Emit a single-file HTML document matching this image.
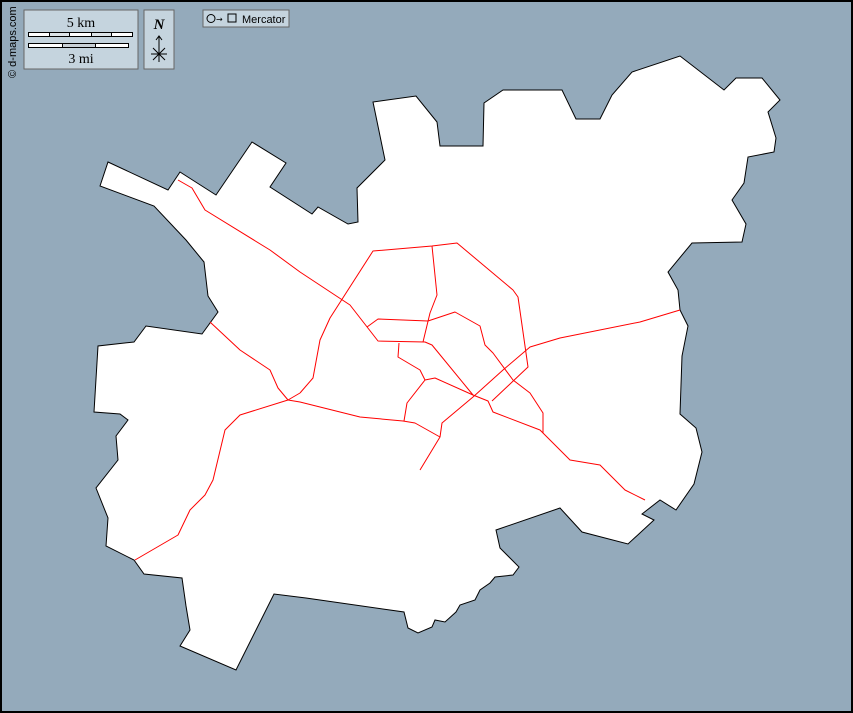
<!DOCTYPE html>
<html><head><meta charset="utf-8"><style>
html,body{margin:0;padding:0;background:#94aabb;}
.wrap{position:relative;width:853px;height:713px;overflow:hidden;}
svg{position:absolute;left:0;top:0;}
</style></head><body><div class="wrap">
<svg width="853" height="713" viewBox="0 0 853 713">
<rect x="1" y="1" width="851" height="711" fill="#94aabb" stroke="#000" stroke-width="2"/>
<polygon fill="#fff" stroke="#000" stroke-width="1" points="100,186 108,162 168,190 180,172 216,195 252,142 286,163 270,187 312,214 318,207 348,224 358,222 357,188 385,160 373,102 416,96 437,122 440,146 483,146 484,103 503,90 562,90 576,119 600,119 612,95 632,72 680,56 724,90 736,78 762,78 780,100 768,112 776,138 774,152 748,157 744,183 732,200 746,224 742,242 692,243 668,272 678,290 680,310 688,326 682,356 680,414 696,428 702,452 694,484 676,510 660,500 642,514 654,520 628,544 582,532 560,508 496,530 500,548 519,567 513,575 495,577 490,583 480,590 475,600 460,605 456,612 445,622 435,620 432,627 418,633 408,628 404,612 306,598 274,594 236,670 180,646 190,630 186,606 182,578 144,574 134,560 106,546 108,518 96,488 118,460 116,436 128,420 120,414 94,412 98,346 134,342 146,326 202,334 218,312 208,296 204,262 186,240 154,206"/>
<g fill="none" stroke="#f00" stroke-width="1" stroke-linejoin="round">
<polyline points="178,180 192,188 205,210 270,250 300,272 350,305 378,341 425,342 432,345 473,395 488,401 493,412 540,430 560,450 570,460 600,465 625,490 645,500"/>
<polyline points="432,246 437,295 430,313 423,342"/>
<polyline points="300,393 313,378 320,340 330,318 373,251 432,246 457,243 513,290 518,297 528,367 492,401"/>
<polyline points="367,327 378,319 428,321 455,312 480,326 485,345 493,353 513,380 530,393 543,413 543,433"/>
<polyline points="399,343 398,357 420,370 425,380 435,378 473,395"/>
<polyline points="425,380 407,403 404,421"/>
<polyline points="288,400 300,402 360,417 403,421 415,423 440,437 420,470"/>
<polyline points="440,437 442,423 473,397 503,370 530,347 560,338 640,322 680,310"/>
<polyline points="210,322 240,350 270,370 278,388 288,400 300,393"/>
<polyline points="288,400 240,415 225,430 213,480 205,495 190,510 178,535 135,560"/>
</g>
<rect x="24" y="10" width="114" height="59" fill="#c5d4de" stroke="#666"/>
<text x="81" y="27" font-family="Liberation Serif" font-size="14" text-anchor="middle">5 km</text>
<rect x="28.5" y="32.5" width="104" height="4" fill="#fff" stroke="#000" stroke-width="1"/>
<rect x="49.5" y="32.5" width="20" height="4" fill="#dde4e8" stroke="#000" stroke-width="1"/>
<rect x="91.5" y="32.5" width="20" height="4" fill="#dde4e8" stroke="#000" stroke-width="1"/>
<rect x="28.5" y="43.5" width="100" height="4" fill="#fff" stroke="#000" stroke-width="1"/>
<rect x="62.5" y="43.5" width="33" height="4" fill="#c8d0d6" stroke="#000" stroke-width="1"/>
<text x="81" y="63" font-family="Liberation Serif" font-size="14" text-anchor="middle">3 mi</text>
<rect x="144" y="10" width="30" height="59" fill="#c5d4de" stroke="#666"/>
<text x="159" y="29" font-family="Liberation Serif" font-size="15" font-style="italic" font-weight="bold" text-anchor="middle">N</text>
<g stroke="#000" stroke-width="1" fill="none"><line x1="159" y1="36" x2="159" y2="62"/><polyline points="156,40 159,36 162,40"/><line x1="151" y1="54" x2="167" y2="54"/><line x1="153" y1="48" x2="165" y2="60"/><line x1="165" y1="48" x2="153" y2="60"/></g>
<rect x="203" y="10" width="86" height="17" fill="#c5d4de" stroke="#666"/>
<circle cx="211" cy="18.5" r="4" fill="none" stroke="#000"/>
<text x="216" y="22" font-family="DejaVu Sans" font-size="8">→</text>
<rect x="228" y="14" width="8" height="8" fill="none" stroke="#000"/>
<text x="242" y="23" font-family="Liberation Sans" font-size="11">Mercator</text>
<text transform="translate(16,78) rotate(-90)" font-family="Liberation Sans" font-size="11">© d-maps.com</text>
</svg></div></body></html>
